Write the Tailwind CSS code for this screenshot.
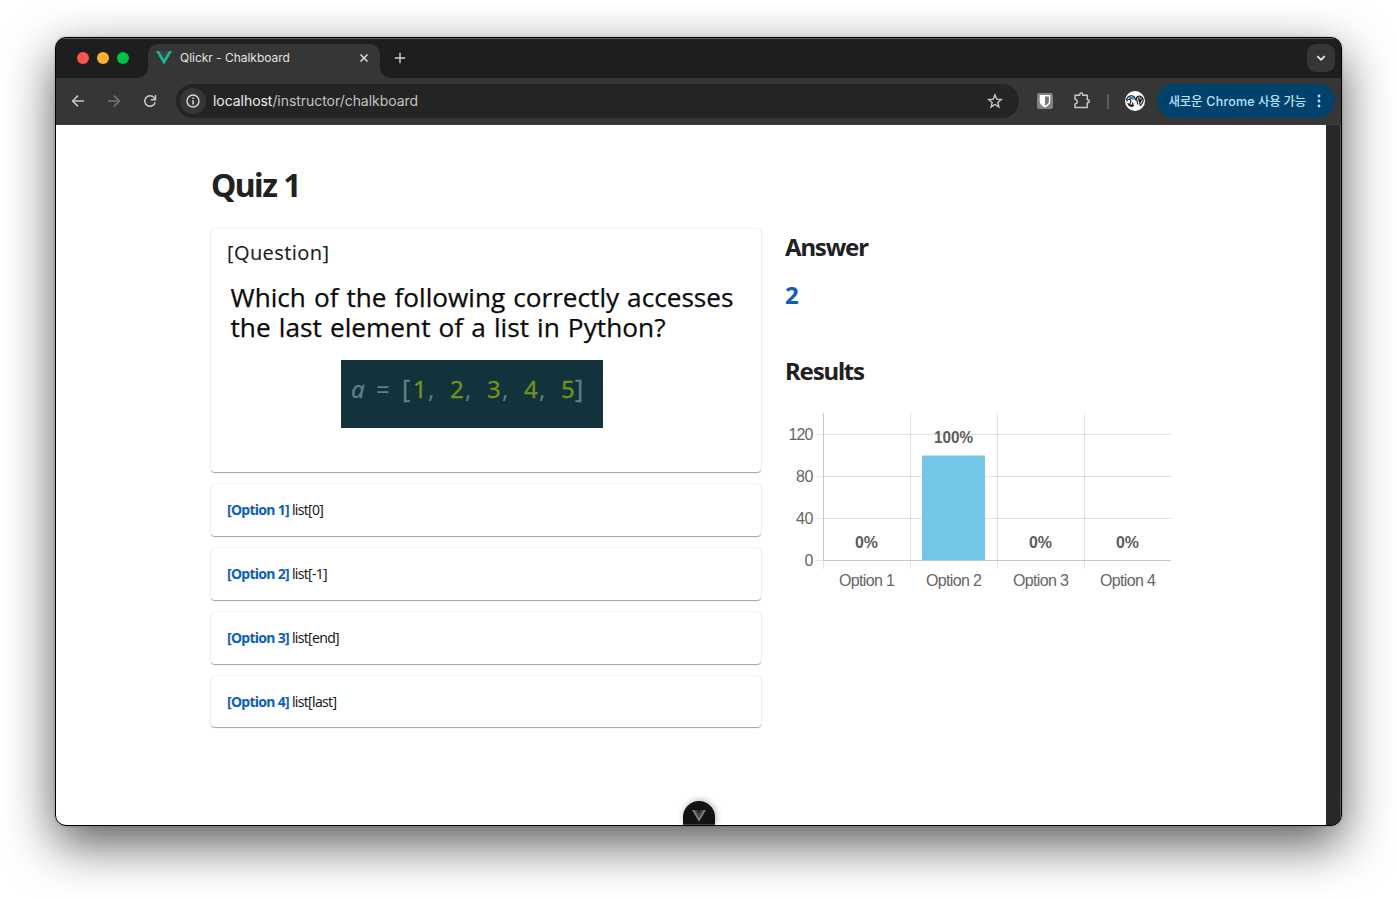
<!DOCTYPE html>
<html lang="ko">
<head>
<meta charset="utf-8">
<title>Qlickr - Chalkboard</title>
<script src="https://cdn.jsdelivr.net/npm/@tailwindcss/browser@4"></script>
</head>
<body class="w-[1397px] h-[899px] overflow-hidden bg-white pl-[55px] pt-[37px]">
<div class="w-[1287px] h-[789px] rounded-[11px] shadow-[0_18px_50px_rgba(0,0,0,0.65),0_0_2px_rgba(0,0,0,0.3)]">
<div class="w-full h-full rounded-[11px] border border-black overflow-hidden flex flex-col bg-[#363636]">

  <!-- Tab strip -->
  <header class="h-10 shrink-0 flex bg-[#1e1e1e] border-t border-[#5c5c5c] font-['Inter','Noto_Sans_CJK_KR',sans-serif]">
    <div class="flex gap-2 pl-[21px] pt-[13px]">
      <span class="size-3 rounded-full bg-[#ff544d]"></span>
      <span class="size-3 rounded-full bg-[#ffb030]"></span>
      <span class="size-3 rounded-full bg-[#00c244]"></span>
    </div>
    <div class="w-2.5 ml-[9px] mt-[29px] h-2.5 bg-[radial-gradient(circle_at_0_0,#1e1e1e_9.5px,#363636_10px)]"></div>
    <div class="w-[232px] h-[34px] mt-[5px] rounded-t-[10px] bg-[#363636] flex items-center pl-2 pr-2.5 pb-[6px] text-[#e3e3e3]">
      <svg class="w-4 h-4 shrink-0" viewBox="0 0 16 16"><path fill="#1eb980" d="M0 1h3.2L8 9.2 12.800 1H16L8 14.800z"/><path fill="#35495e" d="M3.200 1H6.100L8 4.200 9.900 1h2.900L8 9.200z"/></svg>
      <span class="ml-2 text-[12px] tracking-[-0.03px] whitespace-nowrap">Qlickr - Chalkboard</span>
      <svg class="ml-auto w-3 h-3" viewBox="0 0 12 12" fill="none" stroke="#dcdcdc" stroke-width="1.500"><path d="M2.500 2.500l7 7M9.500 2.500l-7 7"/></svg>
    </div>
    <div class="w-2.5 mt-[29px] h-2.5 bg-[radial-gradient(circle_at_100%_0,#1e1e1e_9.5px,#363636_10px)]"></div>
    <svg class="ml-1 mt-[13px] w-3 h-3" viewBox="0 0 12 12" fill="none" stroke="#d0d0d0" stroke-width="1.400"><path d="M6 .8v10.400M.8 6h10.400"/></svg>
    <div class="ml-auto mr-1.5 mt-[5px] w-7 h-7 rounded-[9px] bg-[#363636] flex items-center justify-center">
      <svg class="w-3 h-3" viewBox="0 0 12 12" fill="none" stroke="#eee" stroke-width="1.800"><path d="M2.300 4.200L6 7.800l3.700-3.600"/></svg>
    </div>
  </header>

  <!-- Address bar -->
  <nav class="h-[47px] shrink-0 flex items-center bg-[#363636] border-b border-[#404040] font-['Inter','Noto_Sans_CJK_KR',sans-serif]">
    <svg class="ml-[14px] w-4 h-4" viewBox="0 0 16 16" fill="none" stroke="#c7c7c7" stroke-width="1.500"><path d="M14 8H2.800M8 2.600L2.600 8 8 13.400"/></svg>
    <svg class="ml-5 w-4 h-4" viewBox="0 0 16 16" fill="none" stroke="#757575" stroke-width="1.500"><path d="M2 8h11.200M8 2.600L13.400 8 8 13.400"/></svg>
    <svg class="ml-5 w-4 h-4" viewBox="0 0 16 16" fill="none" stroke="#c7c7c7" stroke-width="1.500"><path d="M13.200 9.200A5.300 5.300 0 1 1 12.200 4.700L13.300 6.300M13.500 2v4.700H8.900"/></svg>
    <div class="ml-[18px] w-[843px] h-[34px] rounded-full bg-[#242424] flex items-center pl-1">
      <span class="w-[26px] h-[26px] rounded-full bg-[#363636] flex items-center justify-center">
        <svg class="w-[14px] h-[14px]" viewBox="0 0 14 14"><circle cx="7" cy="7" r="6" fill="none" stroke="#dadada" stroke-width="1.400"/><path fill="#dadada" d="M6.300 6.200h1.500v4.200H6.300zM6.300 3.500h1.500V5H6.300z"/></svg>
      </span>
      <span class="ml-[7px] pb-[2px] text-[14px] tracking-[-0.05px] whitespace-nowrap text-[#c3c3c3]"><span class="text-[#ededed]">localhost</span>/instructor/chalkboard</span>
      <svg class="ml-auto mr-4 w-4 h-4" viewBox="0 0 16 16" fill="none" stroke="#c7c7c7" stroke-width="1.400"><path d="M8 1.900l1.750 4.200 4.500.4-3.400 3 1 4.400L8 11.500l-3.850 2.400 1-4.400-3.400-3 4.500-.4z"/></svg>
    </div>
    <svg class="ml-[18px] w-4 h-4" viewBox="0 0 16 16"><rect width="16" height="16" rx="2.500" fill="#828282"/><path fill="#fff" d="M2.700 2h10.600v6.500c0 2.600-2.100 4.400-5.300 5.900-3.200-1.500-5.300-3.300-5.300-5.900z"/><path fill="#777" d="M8 3.600h3.900v4.900c0 1.700-1.400 3-3.900 4.300z"/></svg>
    <svg class="ml-5 w-[18px] h-[18px]" viewBox="0 0 18 18" fill="none" stroke="#c7c7c7" stroke-width="1.500" stroke-linejoin="round"><path d="M2 3.200h4.700v-.6a1.500 1.500 0 0 1 3 0v.6h4.600v4.600h.5a1.500 1.500 0 0 1 0 3h-.5v4.700H2v-3.600a2.300 2.300 0 0 0 0-4.600z"/></svg>
    <span class="ml-4 w-[1.500px] h-[15px] bg-[#5c5c5c]"></span>
    <svg class="ml-4 w-5 h-5" viewBox="0 0 20 20"><circle cx="10" cy="10" r="10" fill="#fff"/><path fill="#2187bd" d="M3.500 6.500C5 5 7 5.200 8.500 6.500l1 2.500-2.800-.8-2 .6z"/><g fill="none" stroke="#151515" stroke-width="1.100" stroke-linecap="round"><path d="M1.500 8.500C2.500 5 6.500 3.800 9 5.500l2 3.700M1.800 10c1-1.800 3.400-2 4-.4s-1.600 2.400-1 3.700 2.600 1.200 3.200 0L7.500 12M3 12.500c.8 2.500 3.500 3.800 5.500 2"/><path d="M11.200 6.800l1.600 6.400M11.200 6.800c2-2.800 6.500-1.800 7 1.700.3 2.200-1.400 4.600-3.200 6M13 6.300l1.500 4.700M15.200 6.300c-.5 1.800-.3 3 .3 4.300M17.200 7.500c-1 1-1.800 3.500-2.500 5.500"/></g></svg>
    <div class="ml-3 w-[178px] h-[34px] rounded-full bg-[#00426b] flex items-center pl-3 text-[#b9e0fb] text-[12.500px] font-medium">
      <span class="whitespace-nowrap pt-[2px] tracking-[-0.25px]">새로운 <span class="text-[12.500px] tracking-[0.2px] ml-[1px]">Chrome</span> 사용 가능</span>
      <svg class="ml-auto mr-[14px] w-1 h-[14px]" viewBox="0 0 4 14" fill="#b9e0fb"><circle cx="2" cy="2" r="1.400"/><circle cx="2" cy="7" r="1.400"/><circle cx="2" cy="12" r="1.400"/></svg>
    </div>
  </nav>

  <!-- Page -->
  <div class="flex-1 min-h-0 flex">
    <main class="relative w-[1270px] bg-white pl-[155px] pt-[39px] text-[#212121] font-['Noto_Sans',sans-serif]">
      <h1 class="h-[42px] leading-[42px] text-[32px] font-bold tracking-[-1.500px]">Quiz 1</h1>
      <div class="mt-[23px] flex gap-6">
        <section class="w-[550px] flex flex-col gap-3">
          <div class="h-[243px] rounded-[4px] pl-4 pt-2 shadow-[0_1px_1px_rgba(0,0,0,0.35),0_0_2px_rgba(0,0,0,0.14)]">
            <h2 class="h-8 leading-8 text-[20px] tracking-[0.35px]">[Question]</h2>
            <svg class="block overflow-visible w-[518px] h-[176px]" viewBox="227 269 518 176">
              <g font-family="'Open Sans', sans-serif" font-size="25.500" word-spacing="1.200" fill="#0b0b0b" stroke="#0b0b0b" stroke-width=".25">
                <text x="230.500" y="307" textLength="503" lengthAdjust="spacingAndGlyphs">Which of the following correctly accesses</text>
                <text x="230.500" y="336.500" textLength="435" lengthAdjust="spacingAndGlyphs">the last element of a list in Python?</text>
              </g>
              <rect x="341" y="360" width="262" height="68" fill="#12333c"/>
              <g font-family="'Noto Sans', sans-serif" font-size="24" fill="#5f7f87" stroke-width=".3">
                <text x="351" y="398" font-style="italic" stroke="#5f7f87">a</text>
                <text x="376" y="398">=</text>
                <text x="402" y="398" font-size="25" stroke="#5f7f87">[</text><text x="413" y="398" fill="#74911a" stroke="#74911a">1</text><text x="428" y="398">,</text>
                <text x="450" y="398" fill="#74911a" stroke="#74911a">2</text><text x="465" y="398">,</text>
                <text x="487" y="398" fill="#74911a" stroke="#74911a">3</text><text x="502" y="398">,</text>
                <text x="524" y="398" fill="#74911a" stroke="#74911a">4</text><text x="539" y="398">,</text>
                <text x="561" y="398" fill="#74911a" stroke="#74911a">5</text><text x="575" y="398" font-size="25" stroke="#5f7f87">]</text>
              </g>
            </svg>
          </div>
          <div class="h-[52px] rounded-[4px] pl-4 pb-[2px] flex items-center text-[14px] tracking-[-0.7px] shadow-[0_1px_1px_rgba(0,0,0,0.35),0_0_2px_rgba(0,0,0,0.14)]"><p><b class="text-[#0b60b8]">[Option 1]</b> list[0]</p></div>
          <div class="h-[52px] rounded-[4px] pl-4 pb-[2px] flex items-center text-[14px] tracking-[-0.7px] shadow-[0_1px_1px_rgba(0,0,0,0.35),0_0_2px_rgba(0,0,0,0.14)]"><p><b class="text-[#0b60b8]">[Option 2]</b> list[-1]</p></div>
          <div class="h-[52px] rounded-[4px] pl-4 pb-[2px] flex items-center text-[14px] tracking-[-0.7px] shadow-[0_1px_1px_rgba(0,0,0,0.35),0_0_2px_rgba(0,0,0,0.14)]"><p><b class="text-[#0b60b8]">[Option 3]</b> list[end]</p></div>
          <div class="h-[51px] rounded-[4px] pl-4 flex items-center text-[14px] tracking-[-0.7px] shadow-[0_1px_1px_rgba(0,0,0,0.35),0_0_2px_rgba(0,0,0,0.14)]"><p><b class="text-[#0b60b8]">[Option 4]</b> list[last]</p></div>
        </section>
        <section class="w-[390px] pt-[2px]">
          <h2 class="h-8 leading-8 text-[24px] font-bold tracking-[-1.200px]">Answer</h2>
          <p class="mt-4 h-8 leading-8 text-[24px] font-bold text-[#0b60b8]">2</p>
          <h2 class="mt-11 h-8 leading-8 text-[24px] font-bold tracking-[-1.200px]">Results</h2>
          <svg class="block mt-3 w-[390px] h-[200px]" viewBox="785 399 390 200" font-family="'Liberation Sans', sans-serif" font-size="16" fill="#666">
            <g fill="none" stroke="#000" stroke-opacity=".11">
              <path d="M815 434.500h356M815 476.500h356M815 518.500h356M815 560.500h8M910.500 413v156M997.500 413v156M1084.500 413v156M823.500 561v8"/>
            </g>
            <path d="M823.500 413v148M823 560.500h348" fill="none" stroke="#c9c9c9"/>
            <rect x="922" y="455.500" width="63" height="104.500" fill="#73c7e6"/>
            <text x="788.500" y="440" textLength="25">120</text><text x="796" y="482" textLength="17.500">80</text><text x="796" y="524" textLength="17.500">40</text><text x="804.500" y="566">0</text>
            <text x="839" y="586" textLength="56">Option 1</text><text x="926" y="586" textLength="56">Option 2</text><text x="1013" y="586" textLength="56">Option 3</text><text x="1100" y="586" textLength="56">Option 4</text>
            <g font-weight="700" fill="#5c5c5c">
              <text x="855" y="548" textLength="23" lengthAdjust="spacingAndGlyphs">0%</text><text x="934" y="443" textLength="39" lengthAdjust="spacingAndGlyphs">100%</text><text x="1029" y="548" textLength="23" lengthAdjust="spacingAndGlyphs">0%</text><text x="1116" y="548" textLength="23" lengthAdjust="spacingAndGlyphs">0%</text>
            </g>
          </svg>
        </section>
      </div>
      <div class="absolute left-[627px] bottom-0 w-8 h-6 rounded-t-full bg-[#121212] shadow-[1px_-1px_6px_rgba(0,0,0,0.3)] flex justify-center border-b border-[#444]">
        <svg class="mt-[9px] w-[14px] h-3" viewBox="0 0 14 12"><path fill="#777" d="M0 0h2.800L7 7.200 11.200 0H14L7 12z"/><path fill="#454545" d="M2.800 0h2.600L7 2.700 8.600 0h2.600L7 7.200z"/></svg>
      </div>
    </main>
    <aside class="flex-1 bg-[#282828] border-r border-[#5a5a5a]"></aside>
  </div>
</div>
</div>
</body>
</html>
